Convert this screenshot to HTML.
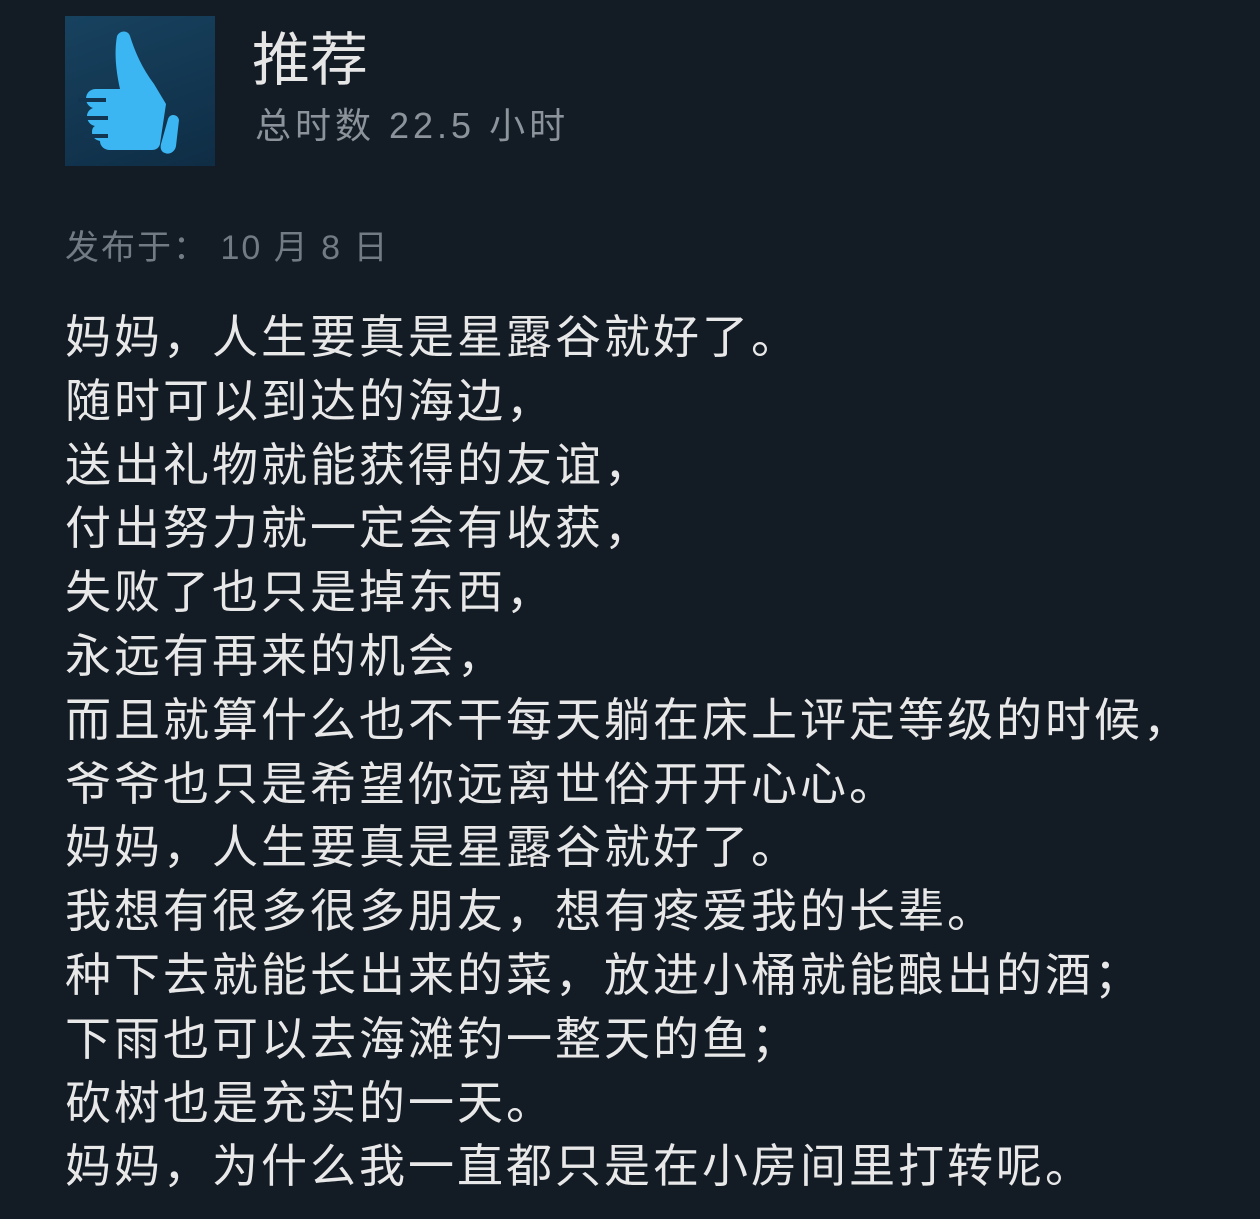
<!DOCTYPE html>
<html><head><meta charset="utf-8"><style>
body{margin:0;width:1260px;height:1219px;background:#131b25;overflow:hidden;font-family:"Liberation Sans","Noto Sans CJK SC",sans-serif;position:relative}
.icon{position:absolute;left:65px;top:16px;width:150px;height:150px;background:linear-gradient(160deg,#17425f,#0f2d45);}
.t{position:absolute;left:252px;top:28px;font-size:58px;color:#e6e6e6;line-height:66px}
.s{position:absolute;left:255px;top:104px;font-size:36px;letter-spacing:4px;color:#8c939a;line-height:44px}
.d{position:absolute;left:65px;top:226px;font-size:34px;letter-spacing:2px;color:#727a83;line-height:44px}
.b{position:absolute;left:65px;top:306px;font-size:46px;letter-spacing:3px;color:#e8e8e8;line-height:63.8px;white-space:pre}
</style></head><body>
<div class="icon"><svg width="150" height="150" viewBox="0 0 150 150">
<path d="M52 20c3-6 11-6 13 0 5 16 12 32 24 48l12 20-6 40c-1 4-4 6-8 6H45c-6 0-10-4-10-9-5-1-8-4-8-9 0-3 1-5 3-6-5-1-8-5-8-10 0-4 3-7 6-8-4-1-7-5-7-9 0-6 4-10 10-10h24c-4-18-6-36-3-53z" fill="#3bb6f2"/>
<path d="M13 84h28M15 102h28M19 120h24" stroke="#123652" stroke-width="4"/>
<path d="M103 103c2-6 10-5 11 1l-3 26c-1 6-7 9-11 7-4-1-5-5-4-9z" fill="#3bb6f2"/>
</svg></div>
<div class="t">推荐</div>
<div class="s">总时数 22.5 小时</div>
<div class="d">发布于： 10 月 8 日</div>
<div class="b">妈妈，人生要真是星露谷就好了。
随时可以到达的海边，
送出礼物就能获得的友谊，
付出努力就一定会有收获，
失败了也只是掉东西，
永远有再来的机会，
而且就算什么也不干每天躺在床上评定等级的时候，
爷爷也只是希望你远离世俗开开心心。
妈妈，人生要真是星露谷就好了。
我想有很多很多朋友，想有疼爱我的长辈。
种下去就能长出来的菜，放进小桶就能酿出的酒；
下雨也可以去海滩钓一整天的鱼；
砍树也是充实的一天。
妈妈，为什么我一直都只是在小房间里打转呢。</div>
</body></html>
